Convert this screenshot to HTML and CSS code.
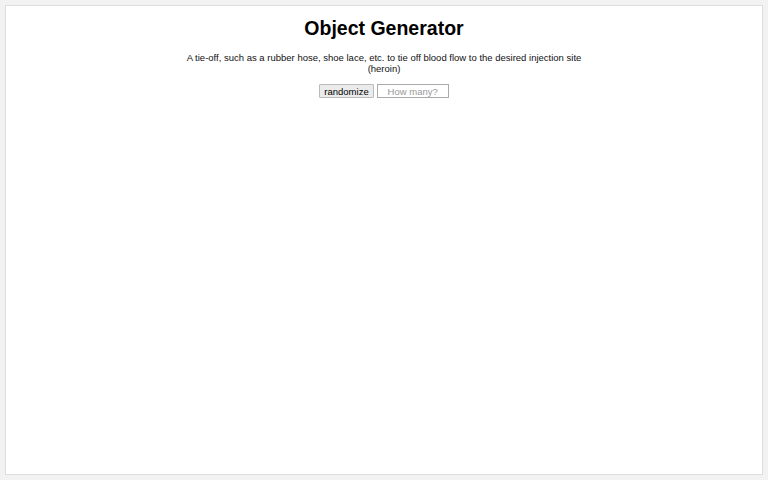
FILE: index.html
```html
<!DOCTYPE html>
<html lang="en">
<head>
  <meta charset="UTF-8">
  <meta name="viewport" content="width=device-width, initial-scale=1.0">
  <title>Object Generator</title>
  <link rel="stylesheet" href="styles.css">
</head>
<body>
<div class="page">
  <h1>Object Generator</h1>
  <p id="object">A tie-off, such as a rubber hose, shoe lace, etc. to tie off blood flow to the desired injection site (heroin)</p>
  <div class="controls">
    <button id="randomize">randomize</button>
    <input type="text" id="count" placeholder="How many?">
  </div>
</div>
</body>
</html>
```

FILE: styles.css
```css
html, body {
  height: 100%;
}
body {
  margin: 0;
  padding: 5px;
  box-sizing: border-box;
  background: #f2f2f2;
  font-family: "Liberation Sans", Arial, sans-serif;
}
.page {
  height: 100%;
  box-sizing: border-box;
  background: #fff;
  border: 1px solid #dcdcdc;
  padding-top: 10px;
  text-align: center;
}
h1 {
  margin: 0;
  font-size: 19.5px;
  line-height: 24px;
  font-weight: bold;
}
#object {
  width: 410px;
  margin: 12px auto 10px;
  font-size: 9.5px;
  line-height: 11px;
  color: #111;
}
.controls {
  display: flex;
  justify-content: center;
  gap: 3px;
}
#randomize {
  font-family: inherit;
  font-size: 9.5px;
  height: 14px;
  padding: 0 4px;
  border: 1px solid #bbb;
  border-radius: 1px;
  background: #ebebeb;
  color: #000;
}
#count {
  font-family: inherit;
  font-size: 9.5px;
  width: 72px;
  height: 14px;
  box-sizing: border-box;
  padding: 0 4px;
  border: 1px solid #aaa;
  text-align: center;
}
#count::placeholder {
  color: #999;
}
```
